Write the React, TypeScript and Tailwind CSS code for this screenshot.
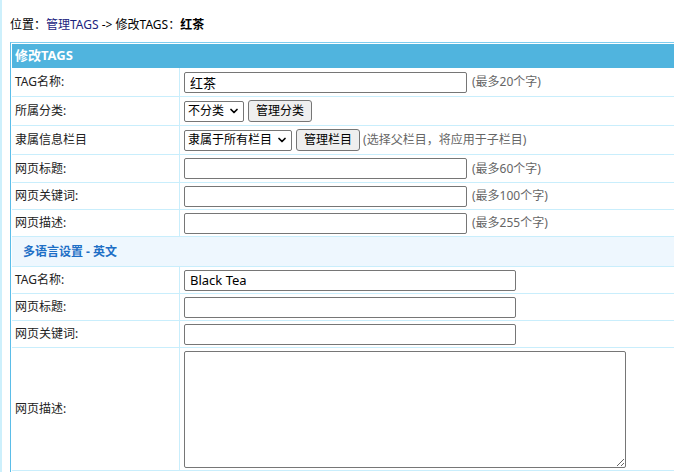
import { ChevronDown } from 'lucide-react';

const font = { fontFamily: '"Noto Sans", "Noto Sans CJK SC", sans-serif' };

function Hint({ children }: { children: React.ReactNode }) {
  return <span className="ml-[5px] text-[12px] text-[#666]">{children}</span>;
}

function Select({ label }: { label: string }) {
  return (
    <div className="flex h-[21px] shrink-0 items-center gap-[4px] whitespace-nowrap rounded-[2px] border border-[#767676] bg-white px-[3px] text-[12px] text-black">
      <span>{label}</span>
      <ChevronDown size={12} strokeWidth={3.5} />
    </div>
  );
}

function Btn({ children }: { children: React.ReactNode }) {
  return (
    <button className="ml-1 h-[22px] shrink-0 whitespace-nowrap rounded-[3px] border border-[#767676] bg-[#efefef] px-[7px] text-[12px] leading-none text-black">
      {children}
    </button>
  );
}

function TextInput({ value, width }: { value?: string; width: string }) {
  return (
    <input
      defaultValue={value}
      className={`h-[21px] rounded-[2px] border border-[#767676] px-[5px] text-[13px] text-black outline-none ${width}`}
      style={font}
    />
  );
}

function Row({
  label,
  h,
  children,
}: {
  label: string;
  h: string;
  children: React.ReactNode;
}) {
  return (
    <div className={`grid grid-cols-[168px_1fr] border-b border-[#c9eefc] ${h}`}>
      <div className="flex items-center border-r border-[#c9eefc] pl-[3px] text-[12px] text-[#222]">
        {label}
      </div>
      <div className="flex items-center pl-[4px]">{children}</div>
    </div>
  );
}

export default function App() {
  return (
    <div className="h-[472px] w-[674px] overflow-hidden bg-white" style={font}>
      <div className="h-full border-l-2 border-[#cdf0fc] pl-2">
        <div className="pt-[16px] pb-[8px] text-[12px] text-black">
          位置：<span className="text-[#1a237e]">管理TAGS</span> -&gt; 修改TAGS：
          <b>红茶</b>
        </div>

        <div className="w-[720px] border border-l-[#5bbde8] border-t-[#7fcdef] border-[#c9eefc] p-px">
          <div className="flex h-[24px] items-center bg-[#50b4de] pl-[3px] text-[13px] font-bold text-white">
            修改TAGS
          </div>

          <Row label="TAG名称:" h="h-[29px]">
            <TextInput value="红茶" width="w-[283px]" />
            <Hint>(最多20个字)</Hint>
          </Row>
          <Row label="所属分类:" h="h-[29px]">
            <Select label="不分类" />
            <Btn>管理分类</Btn>
          </Row>
          <Row label="隶属信息栏目" h="h-[29px]">
            <Select label="隶属于所有栏目" />
            <Btn>管理栏目</Btn>
            <span className="ml-[3px] text-[12px] text-[#666]">(选择父栏目，将应用于子栏目)</span>
          </Row>
          <Row label="网页标题:" h="h-[28px]">
            <TextInput width="w-[283px]" />
            <Hint>(最多60个字)</Hint>
          </Row>
          <Row label="网页关键词:" h="h-[27px]">
            <TextInput width="w-[283px]" />
            <Hint>(最多100个字)</Hint>
          </Row>
          <Row label="网页描述:" h="h-[27px]">
            <TextInput width="w-[283px]" />
            <Hint>(最多255个字)</Hint>
          </Row>

          <div className="flex h-[30px] items-center border-b border-[#c9eefc] bg-[#eef7fe] pl-[11px] text-[12px] font-bold text-[#1e6fc6]">
            多语言设置 - 英文
          </div>

          <Row label="TAG名称:" h="h-[27px]">
            <TextInput value="Black Tea" width="w-[332px]" />
          </Row>
          <Row label="网页标题:" h="h-[27px]">
            <TextInput width="w-[332px]" />
          </Row>
          <Row label="网页关键词:" h="h-[27px]">
            <TextInput width="w-[332px]" />
          </Row>
          <Row label="网页描述:" h="h-[123px]">
            <textarea
              className="h-[117px] w-[442px] rounded-[2px] border border-[#767676] outline-none"
              style={font}
            />
          </Row>
        </div>
      </div>
    </div>
  );
}
